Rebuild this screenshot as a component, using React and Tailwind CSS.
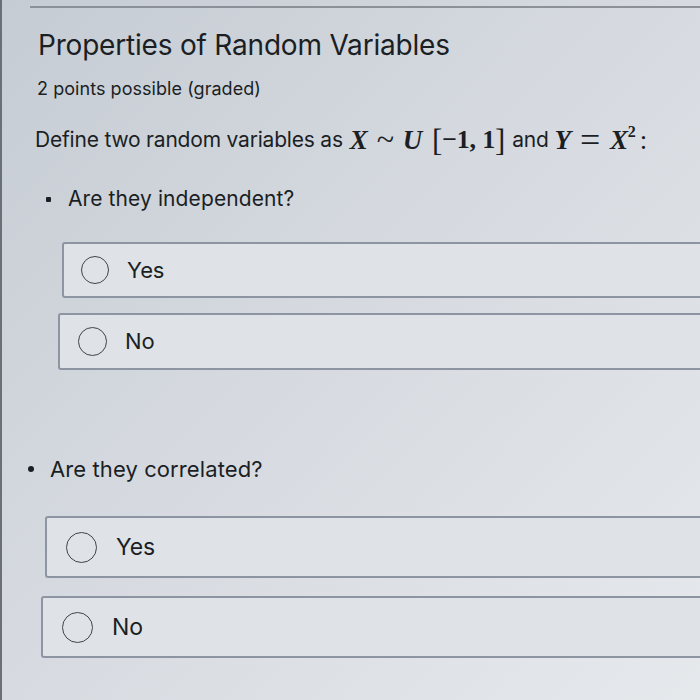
import React from 'react';

function Radio({ size }) {
    return (
        <span
            className="shrink-0 rounded-full border-[1.5px] border-[#3f444b]"
            style={{ width: size, height: size }}
        />
    );
}

function Choice({ label, className, circle, textClass, pad, gap }) {
    return (
        <div
            className={`flex items-center w-[720px] rounded-[3px] border-2 border-[#8d95a3] bg-[#dfe3e8] ${className}`}
        >
            <div className={`flex items-center ${pad} ${gap}`}>
                <Radio size={circle} />
                <span className={`text-[#1b1f24] ${textClass}`}>{label}</span>
            </div>
        </div>
    );
}

export default function App() {
    const serif = "font-['Liberation_Serif',serif] leading-none";

    return (
        <div className="w-[700px] h-[700px] overflow-hidden border-l-2 border-[#6b7078] bg-gradient-to-br from-[#c6ccd4] via-[#d7dbe1] to-[#e6e9ec] font-['Inter',sans-serif] text-[#1b1f24]">
            {/* top rule */}
            <div className="mt-[6px] ml-[28px] h-[2px] bg-[#8b9099]" />

            <div className="mt-[20px] ml-[36px] h-[34px] flex items-center text-[28px] tracking-[-0.2px]">
                Properties of Random Variables
            </div>

            <div className="mt-[14px] ml-[35px] h-[24px] flex items-center text-[18px] tracking-[0.05px]">
                2 points possible (graded)
            </div>

            <div className="mt-[26px] ml-[33px] h-[28px] flex items-center text-[21px] tracking-[-0.2px] whitespace-nowrap">
                <span>Define two random variables as</span>
                <span className={`${serif} italic font-bold text-[27px] ml-[7px]`}>X</span>
                <span className={`${serif} text-[32px] ml-[9px] -mt-[2px]`}>~</span>
                <span className={`${serif} italic font-bold text-[27px] ml-[9px]`}>U</span>
                <span className={`${serif} text-[31px] ml-[10px]`}>[</span>
                <span className={`${serif} font-bold text-[26px]`}>−1, 1</span>
                <span className={`${serif} text-[31px]`}>]</span>
                <span className="ml-[7px]">and</span>
                <span className={`${serif} italic font-bold text-[27px] ml-[6px]`}>Y</span>
                <span className={`${serif} text-[36px] ml-[9px]`}>=</span>
                <span className={`${serif} italic font-bold text-[27px] ml-[10px]`}>X</span>
                <span className={`${serif} font-bold text-[16px] -mt-[16px]`}>2</span>
                <span className={`${serif} text-[27px] ml-[4px]`}>:</span>
            </div>

            <div className="mt-[31px] ml-[44px] h-[28px] flex items-center text-[21px] tracking-[0.1px]">
                <span className="w-[5px] h-[5px] bg-[#1b1f24] rounded-[1px]" />
                <span className="ml-[17px]">Are they independent?</span>
            </div>

            <Choice
                label="Yes"
                className="mt-[29px] ml-[60px] h-[56px]"
                circle={28}
                pad="pl-[17px]"
                gap="gap-[18px]"
                textClass="text-[22px] tracking-[-0.1px]"
            />
            <Choice
                label="No"
                className="mt-[15px] ml-[56px] h-[57px]"
                circle={29}
                pad="pl-[18px]"
                gap="gap-[18px]"
                textClass="text-[22px] tracking-[-0.1px]"
            />

            <div className="mt-[85px] ml-[26px] h-[28px] flex items-center text-[22px] tracking-[0.1px]">
                <span className="w-[6px] h-[6px] bg-[#1b1f24] rounded-full" />
                <span className="ml-[16px]">Are they correlated?</span>
            </div>

            <Choice
                label="Yes"
                className="mt-[33px] ml-[43px] h-[62px]"
                circle={31}
                pad="pl-[19px]"
                gap="gap-[19px]"
                textClass="text-[23px] tracking-[-0.1px]"
            />
            <Choice
                label="No"
                className="mt-[18px] ml-[39px] h-[62px]"
                circle={31}
                pad="pl-[19px]"
                gap="gap-[19px]"
                textClass="text-[23px] tracking-[-0.1px]"
            />
        </div>
    );
}
